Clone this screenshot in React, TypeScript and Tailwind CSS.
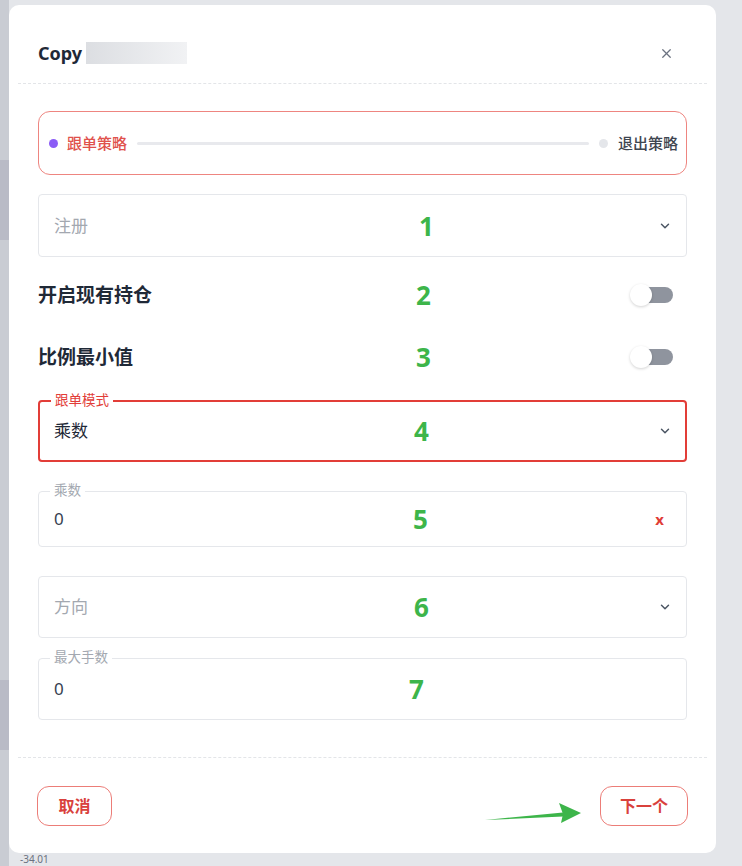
import { ChevronDown, X } from 'lucide-react';

const FONT = { fontFamily: '"Noto Sans", "Noto Sans CJK SC", sans-serif' };

// green annotation number laid over a field
function Mark({ n, left }: { n: string; left: string }) {
  return (
    <span
      className={`pointer-events-none absolute top-1/2 -translate-y-1/2 text-[26px] font-bold leading-none text-[#3db54a] ${left}`}
    >
      {n}
    </span>
  );
}

function Toggle() {
  return (
    <div className="relative flex h-[22px] w-[44px] items-center">
      <div className="ml-[9px] h-[16px] w-[34px] rounded-full bg-[#8f949e]" />
      <div className="absolute left-0 top-0 h-[22px] w-[22px] rounded-full bg-white shadow-[0_1px_3px_rgba(0,0,0,0.18)]" />
    </div>
  );
}

export default function App() {
  return (
    <div className="h-[866px] w-[742px] overflow-hidden bg-[#e4e6ea]" style={FONT}>
      <div className="flex h-full">
        {/* dimmed page behind */}
        <div className="flex w-[9px] flex-col bg-[#c9ccd3]">
          <div className="mt-[160px] h-[80px] bg-[#b9bbc6]" />
          <div className="mt-[440px] h-[70px] bg-[#b9bbc6]" />
        </div>

        <div className="flex flex-col">
          <div className="mt-[5px] w-[707px] rounded-[10px] bg-white">
            {/* header */}
            <div className="flex h-[78px] items-start justify-between px-[29px] pt-[34px]">
              <div className="flex items-center">
                <span className="text-[18px] font-bold leading-[28px] text-[#1f2937]">Copy</span>
                <span className="ml-[4px] h-[22px] w-[101px] bg-gradient-to-r from-[#dcdee2] to-[#f1f2f4]" />
              </div>
              <X className="mr-[13px] mt-[7px] h-[15px] w-[15px] text-[#6b7280]" strokeWidth={2} />
            </div>
            <div className="mx-[9px] border-t border-dashed border-[#e3e5e8]" />

            <div className="flex flex-col px-[29px] pt-[27px]">
              {/* stepper */}
              <div className="flex h-[64px] items-center rounded-[12px] border-[1.5px] border-[#ee8580] pl-[10px] pr-[8px]">
                <span className="h-[9px] w-[9px] rounded-full bg-[#8b5cf6]" />
                <span className="ml-[9px] text-[15px] font-medium text-[#e0514c]">跟单策略</span>
                <div className="mx-[10px] h-[3px] flex-1 rounded bg-[#e8e9ed]" />
                <span className="h-[9px] w-[9px] rounded-full bg-[#e4e6ea]" />
                <span className="ml-[10px] text-[15px] font-medium text-[#3f4650]">退出策略</span>
              </div>

              {/* 注册 */}
              <div className="relative mt-[19px] flex h-[63px] items-center justify-between rounded-[4px] border border-[#e5e7eb] pl-[15px] pr-[14px]">
                <span className="text-[17px] text-[#a3a8b0]">注册</span>
                <Mark n="1" left="left-[380px]" />
                <ChevronDown className="h-[14px] w-[14px] text-[#4b5563]" strokeWidth={2.5} />
              </div>

              {/* toggles */}
              <div className="relative mt-[7px] flex h-[62px] items-center justify-between">
                <span className="text-[19px] font-bold text-[#1f2937]">开启现有持仓</span>
                <Mark n="2" left="left-[378px]" />
                <div className="mr-[13px]">
                  <Toggle />
                </div>
              </div>
              <div className="relative flex h-[62px] items-center justify-between">
                <span className="text-[19px] font-bold text-[#1f2937]">比例最小值</span>
                <Mark n="3" left="left-[378px]" />
                <div className="mr-[13px]">
                  <Toggle />
                </div>
              </div>

              {/* 跟单模式 */}
              <div className="relative mt-[12px] flex h-[62px] items-center justify-between rounded-[4px] border-2 border-[#e23d38] pl-[14px] pr-[13px]">
                <span className="absolute -top-[10px] left-[11px] bg-white px-[4px] text-[13.5px] leading-[17px] text-[#e23d38]">
                  跟单模式
                </span>
                <span className="text-[17px] text-[#1f2937]">乘数</span>
                <Mark n="4" left="left-[374px]" />
                <ChevronDown className="h-[14px] w-[14px] text-[#4b5563]" strokeWidth={2.5} />
              </div>

              {/* 乘数 */}
              <div className="relative mt-[29px] flex h-[56px] items-center justify-between rounded-[4px] border border-[#e5e7eb] pl-[15px] pr-[22px]">
                <span className="absolute -top-[10px] left-[11px] bg-white px-[4px] text-[13.5px] leading-[17px] text-[#a3a8b0]">
                  乘数
                </span>
                <span className="text-[17px] text-[#374151]">0</span>
                <Mark n="5" left="left-[374px]" />
                <span className="text-[15px] font-bold leading-none text-[#e03c36]">x</span>
              </div>

              {/* 方向 */}
              <div className="relative mt-[29px] flex h-[62px] items-center justify-between rounded-[4px] border border-[#e5e7eb] pl-[15px] pr-[14px]">
                <span className="text-[17px] text-[#a3a8b0]">方向</span>
                <Mark n="6" left="left-[375px]" />
                <ChevronDown className="h-[14px] w-[14px] text-[#4b5563]" strokeWidth={2.5} />
              </div>

              {/* 最大手数 */}
              <div className="relative mt-[20px] flex h-[62px] items-center rounded-[4px] border border-[#e5e7eb] pl-[15px]">
                <span className="absolute -top-[10px] left-[11px] bg-white px-[4px] text-[13.5px] leading-[17px] text-[#a3a8b0]">
                  最大手数
                </span>
                <span className="text-[17px] text-[#374151]">0</span>
                <Mark n="7" left="left-[370px]" />
              </div>
            </div>

            <div className="mx-[9px] mt-[37px] border-t border-dashed border-[#e3e5e8]" />

            {/* footer */}
            <div className="relative flex items-center justify-between px-[28px] pb-[27px] pt-[28px]">
              <button className="h-[40px] w-[75px] rounded-[12px] border-[1.5px] border-[#ec7d78] text-[16px] font-bold text-[#d9413c]">
                取消
              </button>
              <svg
                className="pointer-events-none absolute left-[474px] top-[42px]"
                width="100"
                height="26"
                viewBox="0 0 100 26"
              >
                <path d="M2 20 L80 12.5 L80 16.5 Z" fill="#3db54a" />
                <path d="M76 3 L98 13 L78 23 L80 14 Z" fill="#3db54a" />
              </svg>
              <button className="h-[40px] w-[88px] rounded-[12px] border-[1.5px] border-[#ec7d78] text-[16px] font-bold text-[#d9413c]">
                下一个
              </button>
            </div>
          </div>
          <span className="ml-[11px] mt-[1px] text-[10px] leading-[11px] text-[#6b7280]">-34.01</span>
        </div>
      </div>
    </div>
  );
}
